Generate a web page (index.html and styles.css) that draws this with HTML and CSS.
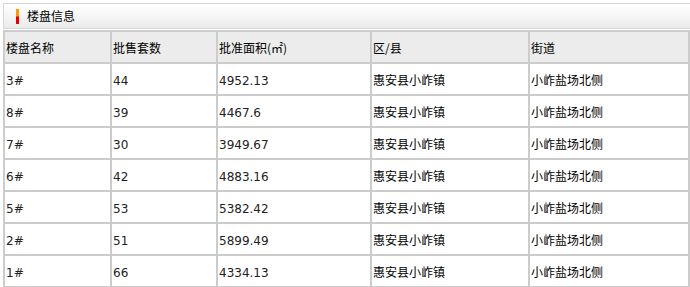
FILE: index.html
```html
<!DOCTYPE html>
<html lang="zh">
<head>
<meta charset="utf-8">
<title>楼盘信息</title>
<link rel="stylesheet" href="styles.css">
</head>
<body>
<div class="wrap">
  <div class="title-bar">
    <span class="marker"></span>
    <span class="title">楼盘信息</span>
  </div>
  <table class="info">
    <colgroup>
      <col class="c1"><col class="c2"><col class="c3"><col class="c4"><col class="c5">
    </colgroup>
    <thead>
      <tr><th>楼盘名称</th><th>批售套数</th><th>批准面积(㎡)</th><th>区/县</th><th>街道</th></tr>
    </thead>
    <tbody>
      <tr><td class="num">3#</td><td class="num">44</td><td class="num">4952.13</td><td>惠安县小岞镇</td><td>小岞盐场北侧</td></tr>
      <tr><td class="num">8#</td><td class="num">39</td><td class="num">4467.6</td><td>惠安县小岞镇</td><td>小岞盐场北侧</td></tr>
      <tr><td class="num">7#</td><td class="num">30</td><td class="num">3949.67</td><td>惠安县小岞镇</td><td>小岞盐场北侧</td></tr>
      <tr><td class="num">6#</td><td class="num">42</td><td class="num">4883.16</td><td>惠安县小岞镇</td><td>小岞盐场北侧</td></tr>
      <tr><td class="num">5#</td><td class="num">53</td><td class="num">5382.42</td><td>惠安县小岞镇</td><td>小岞盐场北侧</td></tr>
      <tr><td class="num">2#</td><td class="num">51</td><td class="num">5899.49</td><td>惠安县小岞镇</td><td>小岞盐场北侧</td></tr>
      <tr><td class="num">1#</td><td class="num">66</td><td class="num">4334.13</td><td>惠安县小岞镇</td><td>小岞盐场北侧</td></tr>
    </tbody>
  </table>
</div>
</body>
</html>
```
FILE: styles.css
```css
html, body {
  margin: 0;
  padding: 0;
  background: #fff;
}
body {
  font-family: "Noto Sans CJK SC", "DejaVu Sans", sans-serif;
  font-size: 12px;
  color: #000;
}
.wrap {
  padding: 3px 0 0 3px;
  width: 687px;
}
.title-bar {
  box-sizing: border-box;
  height: 26px;
  border: 1px solid #d6d6d6;
  border-right: none;
  background: linear-gradient(#ffffff, #ebebeb);
  display: flex;
  align-items: center;
  padding-left: 12px;
}
.marker {
  width: 3px;
  height: 15px;
  background: linear-gradient(#ff9900 0%, #ff9900 48%, #e60000 52%, #e60000 100%);
  margin-right: 8px;
}
.title {
  font-size: 12px;
  line-height: 14px;
}
table.info {
  width: 687px;
  margin-top: 1px;
  table-layout: fixed;
  border-collapse: separate;
  border-spacing: 2px;
  background: #cccccc;
}
.c1 { width: 105px; }
.c2 { width: 104px; }
.c3 { width: 152px; }
.c4 { width: 156px; }
.c5 { width: 158px; }
th, td {
  height: 30px;
  padding: 0 0 0 1px;
  text-align: left;
  vertical-align: middle;
  font-weight: normal;
  font-size: 12px;
  white-space: nowrap;
  overflow: hidden;
}
th {
  background: #ececec;
}
td {
  background: #fff;
}
td.num {
  font-family: "DejaVu Sans", sans-serif;
  font-size: 12px;
  color: #222;
  padding-top: 4px;
  height: 26px;
}
```
